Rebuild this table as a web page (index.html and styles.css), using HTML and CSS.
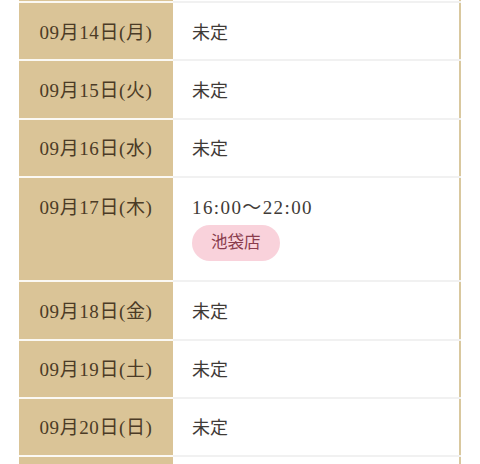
FILE: index.html
```html
<!DOCTYPE html>
<html lang="ja">
<head>
<meta charset="utf-8">
<link rel="stylesheet" href="styles.css">
</head>
<body>
<div class="schedule">
  <table class="sched-table">
    <tbody>
      <tr class="peek"><th class="date"></th><td class="info"></td></tr>
      <tr><th class="date">09月14日(月)</th><td class="info">未定</td></tr>
      <tr><th class="date">09月15日(火)</th><td class="info">未定</td></tr>
      <tr><th class="date">09月16日(水)</th><td class="info">未定</td></tr>
      <tr>
        <th class="date">09月17日(木)</th>
        <td class="info">
          <div class="time">16:00〜22:00</div>
          <span class="badge">池袋店</span>
        </td>
      </tr>
      <tr><th class="date">09月18日(金)</th><td class="info">未定</td></tr>
      <tr><th class="date">09月19日(土)</th><td class="info">未定</td></tr>
      <tr><th class="date">09月20日(日)</th><td class="info">未定</td></tr>
      <tr class="peek peek-bottom"><th class="date"></th><td class="info"></td></tr>
    </tbody>
  </table>
</div>
</body>
</html>
```

FILE: styles.css
```css
html, body {
  margin: 0;
  padding: 0;
  background: #ffffff;
}

body {
  overflow: hidden;
  height: 464px;
}

.schedule {
  margin-left: 19px;
  width: 442px;
}

.sched-table {
  width: 100%;
  border-collapse: collapse;
  border-right: 2px solid #d9c89f;
  table-layout: fixed;
}

.sched-table th,
.sched-table td {
  padding: 16.5px 0 13.5px;
  line-height: 26.4px;
  vertical-align: top;
  font-size: 18px;
  font-weight: normal;
  font-family: "Liberation Serif", "Noto Sans CJK JP", serif;
}

.sched-table .peek th,
.sched-table .peek td {
  padding: 0;
  height: 1px;
  line-height: 1px;
}

.sched-table .peek-bottom th,
.sched-table .peek-bottom td {
  height: 30px;
}

.date {
  width: 154px;
  background: #dac497;
  color: #4b3b26;
  text-align: center;
  border-bottom: 2px solid #fbf9f4;
  letter-spacing: 0.6px;
}

.sched-table .date {
  font-size: 19px;
}

.info {
  background: #ffffff;
  color: #3f3b37;
  text-align: left;
  padding-left: 19px !important;
  border-bottom: 2px solid #f1f1f1;
}

.time {
  font-size: 19px;
  letter-spacing: 1.4px;
}

.badge {
  display: block;
  width: fit-content;
  margin-top: 3.5px;
  margin-bottom: 6px;
  height: 36px;
  line-height: 36px;
  padding: 0 19px;
  border-radius: 18px;
  background: #f9d2db;
  color: #8a3c4c;
  font-size: 16.5px;
  font-family: "Liberation Serif", "Noto Sans CJK JP", serif;
}
```
